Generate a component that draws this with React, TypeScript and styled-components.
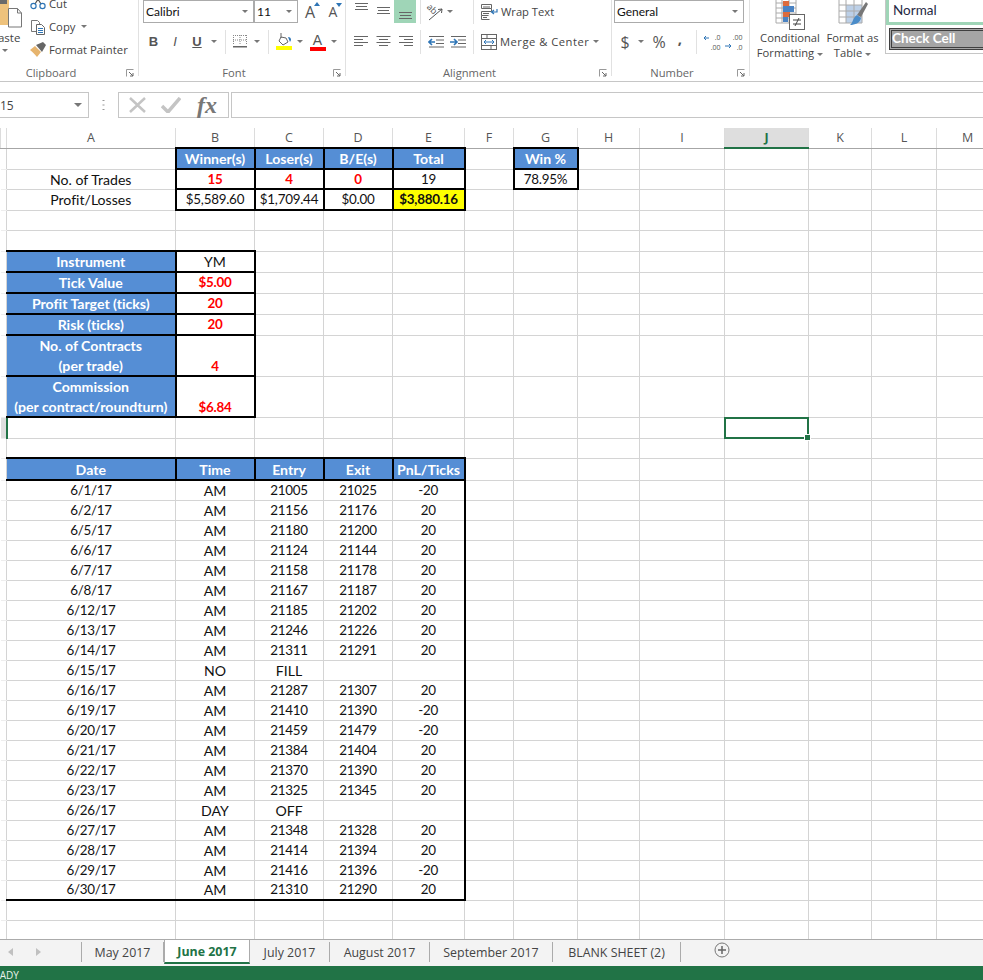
import React from 'react';
import styled, { createGlobalStyle, css } from 'styled-components';

const GlobalStyle = createGlobalStyle`
  html, body {
    margin: 0;
    padding: 0;
    background: #fff;
  }
`;

const uiFont = `'Open Sans', 'Noto Sans', sans-serif`;
const sheetFont = `Lato, 'Liberation Sans', sans-serif`;
const gridLine = '#d4d4d4';
const excelGreen = '#217346';

const Page = styled.div`
  width: 983px;
  height: 980px;
  overflow: hidden;
  display: flex;
  flex-direction: column;
  font-family: ${uiFont};
`;

/* ---------- ribbon ---------- */

const Ribbon = styled.div`
  height: 81px;
  flex: none;
  display: flex;
  border-bottom: 1px solid #c6c6c6;
  overflow: hidden;
  background: #fff;
`;

const Group = styled.div<{ $w: number }>`
  width: ${(p) => p.$w}px;
  flex: none;
  height: 76px;
  display: flex;
  flex-direction: column;
  border-right: 1px solid #e1e1e1;
  box-sizing: border-box;
`;

const GroupBody = styled.div`
  flex: 1;
  min-height: 0;
`;

const GroupFoot = styled.div<{ $shift: number }>`
  height: 19px;
  margin-bottom: -6px;
  box-sizing: border-box;
  padding-right: ${(p) => p.$shift}px;
  display: flex;
  align-items: center;
  justify-content: center;
  position: relative;
  font-size: 11.2px;
  color: #666;
`;

const Launcher = styled.svg`
  position: absolute;
  right: 4px;
  top: 6px;
`;

const ToolRow = styled.div<{ $pl?: number; $mt?: number }>`
  display: flex;
  align-items: center;
  height: 23px;
  padding-left: ${(p) => p.$pl ?? 0}px;
  margin-top: ${(p) => p.$mt ?? 0}px;
`;

const Slot = styled.div<{ $w: number; $on?: boolean }>`
  width: ${(p) => p.$w}px;
  height: 23px;
  flex: none;
  display: flex;
  align-items: center;
  justify-content: center;
  background: ${(p) => (p.$on ? '#9fd5b7' : 'transparent')};
  color: #555;
`;

const RowRule = styled.div`
  width: 1px;
  height: 24px;
  flex: none;
  background: #e1e1e1;
`;

const Caret = styled.span`
  display: block;
  width: 0;
  height: 0;
  border-left: 3px solid transparent;
  border-right: 3px solid transparent;
  border-top: 3px solid #777;
`;

const SelectBox = styled.div<{ $w: number; $ml?: number }>`
  width: ${(p) => p.$w}px;
  margin-left: ${(p) => p.$ml ?? 0}px;
  height: 23px;
  box-sizing: border-box;
  flex: none;
  border: 1px solid #ababab;
  display: flex;
  align-items: center;
  justify-content: space-between;
  padding: 0 5px 0 2px;
  font-family: ${sheetFont};
  font-size: 12px;
  color: #111;
`;

const ClipWrap = styled.div`
  display: flex;
  height: 100%;
`;

const PasteCol = styled.div`
  width: 30px;
  flex: none;
  display: flex;
  flex-direction: column;
  align-items: flex-start;
  color: #444;
  font-size: 11.5px;
`;

const PasteText = styled.span`
  margin: 2px 0 0 -9px;
  line-height: 15px;
`;

const PasteCaret = styled(Caret)`
  margin: 4px 0 0 2px;
`;

const ClipCol = styled.div`
  margin-top: -8px;
  display: flex;
  flex-direction: column;
`;

const ClipItem = styled.div`
  height: 23px;
  display: flex;
  align-items: center;
  gap: 3px;
  font-size: 11.3px;
  color: #444;
  white-space: nowrap;
`;

const ClipIcon = styled.span`
  width: 16px;
  height: 16px;
  flex: none;
  display: block;
`;

const StepA = styled.span<{ $size: number }>`
  position: relative;
  font-size: ${(p) => p.$size}px;
  line-height: 1;
  color: #555;
`;

const StepMark = styled.svg`
  position: absolute;
  top: -2px;
  right: -5px;
`;

const StyleLetter = styled.span<{ $bold?: boolean; $italic?: boolean; $under?: boolean }>`
  font-family: 'Liberation Sans', sans-serif;
  font-size: 13px;
  font-weight: ${(p) => (p.$bold || p.$under ? 700 : 400)};
  font-style: ${(p) => (p.$italic ? 'italic' : 'normal')};
  text-decoration: ${(p) => (p.$under ? 'underline' : 'none')};
  color: #555;
`;

const ColorMark = styled.div<{ $c: string }>`
  width: 16px;
  display: flex;
  flex-direction: column;
  align-items: center;
  font-family: 'Liberation Sans', sans-serif;
  font-size: 14px;
  line-height: 14px;
  font-weight: 400;
  color: #555;
  &::after {
    content: '';
    display: block;
    width: 16px;
    height: 4px;
    background: ${(p) => p.$c};
  }
`;

const ToolLabel = styled.span`
  font-size: 11.2px;
  color: #444;
  white-space: nowrap;
  margin-left: 3px;
`;

const WideLabel = styled(ToolLabel)`
  letter-spacing: 0.5px;
`;

const NumMark = styled.span<{ $size: number; $bold?: boolean; $lift?: number }>`
  font-size: ${(p) => p.$size}px;
  line-height: 1;
  color: #555;
  font-weight: ${(p) => (p.$bold ? 700 : 400)};
  margin-top: ${(p) => p.$lift ?? 0}px;
`;

const StyleCols = styled.div`
  display: flex;
  flex: 1;
  height: 100%;
  padding-left: 7px;
`;

const BigButton = styled.div<{ $w: number; $ml?: number }>`
  width: ${(p) => p.$w}px;
  margin-left: ${(p) => p.$ml ?? 0}px;
  flex: none;
  display: flex;
  flex-direction: column;
  align-items: center;
  font-size: 11.2px;
  line-height: 15px;
  color: #444;
  text-align: center;
  white-space: nowrap;
`;

const BigIcon = styled.div`
  height: 30px;
  display: flex;
  align-items: flex-end;
  overflow: visible;
`;

const InlineCaret = styled(Caret)`
  display: inline-block;
  vertical-align: middle;
  margin-left: 3px;
`;

const Gallery = styled.div`
  margin-left: 5px;
  flex: 1;
  height: 54px;
  box-sizing: border-box;
  border-left: 1px solid #c6c6c6;
  border-bottom: 1px solid #c6c6c6;
`;

const NormalStyle = styled.div`
  height: 25px;
  box-sizing: border-box;
  border: 3px solid #9fd5b7;
  border-top: none;
  border-right: none;
  padding: 0 0 2px 4px;
  display: flex;
  align-items: center;
  font-family: ${sheetFont};
  font-size: 13.5px;
  color: #1f2a44;
`;

const CheckStyle = styled.div`
  height: 22px;
  margin: 3px 0 0 3px;
  box-sizing: border-box;
  border: 3px double #3f3f3f;
  border-right: none;
  background: #a5a5a5;
  display: flex;
  align-items: center;
  padding: 0 0 2px 0;
  font-family: ${sheetFont};
  font-size: 13.5px;
  font-weight: 700;
  color: #fff;
`;

/* ---------- formula bar ---------- */

const FormulaBar = styled.div`
  height: 46px;
  flex: none;
  box-sizing: border-box;
  padding-top: 10px;
  display: flex;
  background: #fff;
`;

const BarField = styled.div`
  height: 26px;
  box-sizing: border-box;
  border: 1px solid #c6c6c6;
  display: flex;
  align-items: center;
`;

const NameBox = styled(BarField)`
  width: 89px;
  border-left: none;
  justify-content: space-between;
  padding-right: 6px;
  font-size: 12px;
  color: #444;
`;

const NameCaret = styled(Caret)`
  border-left-width: 4px;
  border-right-width: 4px;
  border-top-width: 4px;
`;

const DotsWrap = styled.div`
  width: 29px;
  flex: none;
  height: 26px;
  display: flex;
  align-items: center;
  justify-content: center;
`;

const FormulaButtons = styled(BarField)`
  width: 111px;
  padding-left: 9px;
  gap: 14px;
`;

const FxMark = styled.span`
  font-family: 'Liberation Serif', serif;
  font-style: italic;
  font-weight: 700;
  font-size: 24px;
  line-height: 1;
  color: #777;
  margin-left: 2px;
`;

const FormulaInput = styled(BarField)`
  flex: 1;
  margin-left: 2px;
  border-right: none;
`;

/* ---------- sheet ---------- */

const SheetArea = styled.div`
  flex: 1;
  min-height: 0;
  overflow: hidden;
`;

const SheetTable = styled.table`
  border-collapse: collapse;
  table-layout: fixed;
  width: 998px;
`;

const ColHead = styled.th<{ $on?: boolean }>`
  height: 20px;
  padding: 0;
  box-sizing: border-box;
  font-family: ${uiFont};
  font-weight: ${(p) => (p.$on ? 700 : 400)};
  font-size: 12.5px;
  color: ${(p) => (p.$on ? excelGreen : '#555')};
  background: ${(p) => (p.$on ? '#dedede' : '#fff')};
  border-left: 1px solid #dcdcdc;
  border-right: 1px solid #dcdcdc;
  border-bottom: ${(p) => (p.$on ? `2px solid ${excelGreen}` : '1px solid #a6a6a6')};
`;

const Row = styled.tr<{ $h: number }>`
  height: ${(p) => p.$h}px;
`;

const RowHead = styled.td<{ $on?: boolean }>`
  padding: 0;
  background: ${(p) => (p.$on ? '#dedede' : '#fff')};
  border-top: 1px solid #eee;
  border-bottom: 1px solid #eee;
  border-right: ${(p) => (p.$on ? `2px solid ${excelGreen}` : `1px solid ${gridLine}`)};
`;

type Kind = 'plain' | 'head' | 'red' | 'total';

const blackSide = (black: string | undefined, letter: string, side: string) =>
  black && black.includes(letter)
    ? css`
        border-${side}: 2px solid #000;
      `
    : null;

const Cell = styled.td<{ $kind?: Kind; $black?: string; $tall?: boolean; $num?: boolean }>`
  padding: 0;
  position: relative;
  border: 1px solid ${gridLine};
  font-family: ${sheetFont};
  font-size: ${(p) => (p.$num ? 13.4 : 14.1)}px;
  font-variant-ligatures: none;
  letter-spacing: ${(p) => (p.$num ? -0.25 : 0)}px;
  line-height: 17px;
  text-align: center;
  vertical-align: ${(p) => (p.$tall ? 'bottom' : 'middle')};
  white-space: nowrap;
  color: #111;
  ${(p) => blackSide(p.$black, 't', 'top')}
  ${(p) => blackSide(p.$black, 'r', 'right')}
  ${(p) => blackSide(p.$black, 'b', 'bottom')}
  ${(p) => blackSide(p.$black, 'l', 'left')}
  ${(p) =>
    p.$kind === 'head' &&
    css`
      background: #558ed5;
      color: #fff;
      font-weight: 700;
      vertical-align: middle;
    `}
  ${(p) =>
    p.$kind === 'red' &&
    css`
      color: #ff0000;
      font-weight: 700;
    `}
  ${(p) =>
    p.$kind === 'total' &&
    css`
      background: #ffff00;
      color: #111;
      font-weight: 700;
    `}
`;

const MultiLine = styled.span`
  white-space: pre-line;
  display: block;
  line-height: 20px;
  margin: -2px 0;
`;

const SelectionBox = styled.div`
  position: absolute;
  inset: -1px;
  border: 2px solid ${excelGreen};
`;

const SelectionHandle = styled.div`
  position: absolute;
  right: -4px;
  bottom: -4px;
  width: 5px;
  height: 5px;
  background: ${excelGreen};
  border: 1px solid #fff;
`;

/* ---------- tabs and status ---------- */

const TabBar = styled.div`
  height: 27px;
  flex: none;
  box-sizing: border-box;
  display: flex;
  background: #f3f3f3;
  border-top: 1px solid #ababab;
`;

const TabNav = styled.div`
  width: 82px;
  flex: none;
  box-sizing: border-box;
  height: 20px;
  margin-top: 2px;
  border-right: 1px solid #ababab;
  display: flex;
  align-items: center;
  gap: 23px;
  padding-left: 8px;
`;

const NavArrow = styled.span<{ $right?: boolean }>`
  width: 0;
  height: 0;
  border-top: 4px solid transparent;
  border-bottom: 4px solid transparent;
  ${(p) => (p.$right ? 'border-left: 5px solid #c0c0c0;' : 'border-right: 5px solid #c0c0c0;')}
`;

const Tab = styled.div<{ $w: number; $on?: boolean }>`
  width: ${(p) => p.$w}px;
  flex: none;
  box-sizing: border-box;
  display: flex;
  align-items: center;
  justify-content: center;
  font-size: 12.4px;
  white-space: nowrap;
  ${(p) =>
    p.$on
      ? css`
          height: 25px;
          margin-top: -1px;
          background: #fff;
          color: ${excelGreen};
          font-weight: 700;
          border-left: 1px solid #ababab;
          border-right: 1px solid #ababab;
          border-top: 1px solid #ababab;
          border-bottom: 2px solid ${excelGreen};
        `
      : css`
          height: 20px;
          margin-top: 2px;
          color: #444;
          border-right: 1px solid #ababab;
        `}
`;

const AddSheet = styled.svg`
  margin: 2px 0 0 33px;
  flex: none;
`;

const StatusBar = styled.div`
  height: 14px;
  flex: none;
  background: ${excelGreen};
  color: #e8f2ec;
  font-size: 10px;
  line-height: 19px;
  overflow: hidden;
`;

const StatusText = styled.div`
  margin-left: -12px;
`;

/* ---------- icons ---------- */

const Launch = () => (
  <Launcher width="8" height="8" viewBox="0 0 8 8">
    <path d="M.5 7.5V.5h7" fill="none" stroke="#999" />
    <path d="M3 3l4 4M7 4v3H4" fill="none" stroke="#666" />
  </Launcher>
);

const AlignIcon = ({ mode }: { mode: 'left' | 'center' | 'right' }) => {
  const rows = [14, 9, 14, 9];
  return (
    <svg width="15" height="15" viewBox="0 0 15 15">
      {rows.map((w, i) => {
        const x = mode === 'left' ? 0 : mode === 'right' ? 15 - w : (15 - w) / 2;
        return <rect key={i} x={x} y={2 + i * 3} width={w} height="1" fill="#666" />;
      })}
    </svg>
  );
};

const VAlignIcon = ({ y }: { y: number }) => (
  <svg width="15" height="23" viewBox="0 0 15 23">
    {[0, 3, 6].map((d, i) => (
      <rect key={d} x={i === 1 ? 2 : 1} y={y + d} width={i === 1 ? 11 : 13} height="1" fill="#666" />
    ))}
  </svg>
);

const ScissorsIcon = () => (
  <svg width="16" height="16" viewBox="0 0 16 16">
    <path d="M5 8L10 0M11 8L6 0" stroke="#555" strokeWidth="1.2" fill="none" />
    <circle cx="3.5" cy="10" r="2.6" stroke="#2e75b6" strokeWidth="1.2" fill="none" />
    <circle cx="12.5" cy="10" r="2.6" stroke="#2e75b6" strokeWidth="1.2" fill="none" />
  </svg>
);

const CopyIcon = () => (
  <svg width="16" height="16" viewBox="0 0 16 16">
    <path d="M1.5 1.5h6l2 2v9h-8z" fill="#fff" stroke="#777" />
    <path d="M6.5 5.5h5l3 3v7h-8z" fill="#fff" stroke="#666" />
    <path d="M8 9.5h5M8 11.5h5M8 13.5h5" stroke="#2e75b6" />
  </svg>
);

const PainterIcon = () => (
  <svg width="16" height="16" viewBox="0 0 16 16">
    <path d="M0 8l5-4 6 6-4 5C5 13 3 10 0 8z" fill="#e6b46e" />
    <path d="M6 3l7-3 3 3-4 7z" fill="#666" />
  </svg>
);

const PasteIcon = () => (
  <svg width="24" height="28" viewBox="0 0 24 28">
    <rect x="0" y="0" width="9" height="25" fill="#eec27c" />
    <rect x="0" y="0" width="7" height="4" fill="#6a6a6a" />
    <path d="M8.5 8.5h9l4 4.500v14h-13z" fill="#fff" stroke="#777" />
    <path d="M17.500 8.500v4.500h4" fill="none" stroke="#777" />
  </svg>
);

const BordersIcon = () => (
  <svg width="14" height="15" viewBox="0 0 14 15">
    <path d="M.5 1v10M7 1v10M13.500 1v10M0 1.500h14M0 6h14" stroke="#888" strokeDasharray="1 1" fill="none" />
    <rect x="0" y="12" width="14" height="1.500" fill="#666" />
  </svg>
);

const BucketIcon = () => (
  <svg width="16" height="17" viewBox="0 0 16 17">
    <path d="M5 4l5 1 2 4-5 3-4-4z" fill="#fff" stroke="#666" />
    <path d="M5 0v5" stroke="#666" />
    <path d="M12 4c2 0 3 1 3 3l-1 2z" fill="#2e75b6" />
    <rect x="0" y="13" width="16" height="4" fill="#ffff00" />
  </svg>
);

const OrientationIcon = () => (
  <svg width="20" height="20" viewBox="0 0 20 20" overflow="visible">
    <text x="8" y="10" fontSize="9" fontFamily="Open Sans" fill="#555" textAnchor="middle" transform="rotate(45 8 7)">
      ab
    </text>
    <path d="M5 18L18 7M18 7l-4 .5M18 7l-.5 4" stroke="#555" fill="none" />
  </svg>
);

const WrapIcon = () => (
  <svg width="17" height="16" viewBox="0 0 17 16">
    <path d="M.5 .5h10v4H.5zM.5 7.500h10v-3M.5 7.500v4h7M.5 11.500v4h8" fill="none" stroke="#666" />
    <path d="M2 3h7M2 9.500h6M2 13.500h4" stroke="#666" />
    <path d="M16 5v3h-5M13 6l-2.500 2 2.500 2" fill="none" stroke="#2e75b6" strokeWidth="1.2" />
  </svg>
);

const MergeIcon = () => (
  <svg width="16" height="16" viewBox="0 0 16 16">
    <rect x=".5" y=".5" width="15" height="15" fill="#fff" stroke="#666" />
    <path d="M0 4.500h16M0 11.500h16M6 0v4.500M10 11.500V16" stroke="#666" />
    <path d="M3 8h10M5 6L3 8l2 2M11 6l2 2-2 2" fill="none" stroke="#2e75b6" />
  </svg>
);

const IndentIcon = ({ flip }: { flip?: boolean }) => (
  <svg width="16" height="14" viewBox="0 0 16 14">
    <path d="M1 1.500h15M8 5h8M8 8.500h8M1 12h15" stroke="#666" />
    {flip ? (
      <path d="M0 7h6M4 4l3 3-3 3" fill="none" stroke="#2e75b6" strokeWidth="1.600" />
    ) : (
      <path d="M7 7H1M4 4L1 7l3 3" fill="none" stroke="#2e75b6" strokeWidth="1.600" />
    )}
  </svg>
);

const DecimalIcon = ({ top, bottom, left }: { top: string; bottom: string; left?: boolean }) => (
  <svg width="18" height="20" viewBox="0 0 18 20">
    <text x="17.500" y="7.500" textAnchor="end" fontSize="7" fontFamily="Open Sans" fill="#555">
      {top}
    </text>
    <text x="17.500" y="17.500" textAnchor="end" fontSize="7" fontFamily="Open Sans" fill="#555">
      {bottom}
    </text>
    {left ? (
      <path d="M6 6H1M3 4L1 6l2 2" fill="none" stroke="#2e75b6" />
    ) : (
      <path d="M0 14h6M4 12l2 2-2 2" fill="none" stroke="#2e75b6" />
    )}
  </svg>
);

const CondFormatIcon = () => (
  <svg width="30" height="30" viewBox="0 1 30 30">
    <path d="M1 0v24h20M7 0v24M14 0v24M21 0v16M1 4h20M1 9h20M1 14h20M1 19h13" stroke="#aaa" fill="none" />
    <rect x="8" y="2" width="6" height="5" fill="#dd6b3c" />
    <rect x="8" y="7" width="11" height="6" fill="#4a83c3" />
    <rect x="8" y="13" width="7" height="5" fill="#dd6b3c" />
    <rect x="8" y="18" width="5" height="5" fill="#4a83c3" />
    <rect x="14.500" y="15.500" width="15" height="15" fill="#fff" stroke="#666" />
    <path d="M18 21h8M18 25h8M24 19l-4 8" stroke="#444" fill="none" />
  </svg>
);

const FormatTableIcon = () => (
  <svg width="30" height="30" viewBox="0 1 30 30">
    <rect x="1" y="0" width="23" height="24" fill="#fff" />
    <rect x="8" y="6" width="16" height="18" fill="#bcd0e8" />
    <path d="M1 0v24h23V0M8 0v24M16 0v24M1 6h23M1 12h23M1 18h23" stroke="#aaa" fill="none" />
    <path d="M19 16L28 3l2 2-7 13z" fill="#777" />
    <path d="M19 16l4 3c-1 5-6 7-11 7 3-2 3-8 7-10z" fill="#4a8cc9" />
  </svg>
);

/* ---------- sheet data ---------- */

const columns = ['A', 'B', 'C', 'D', 'E', 'F', 'G', 'H', 'I', 'J', 'K', 'L', 'M'];
const colWidths = [6, 169, 79, 69, 69, 72, 49, 64, 62, 85, 84, 63, 65, 62];

type CellDef = { t?: string; kind?: Kind; black?: string; tall?: boolean };
type RowDef = { h: number; cells: Record<string, CellDef>; selected?: boolean };

const headCell = (t: string, black = 'trbl'): CellDef => ({ t, kind: 'head', black });
const boxCell = (t: string, kind: Kind = 'plain', tall = false): CellDef => ({ t, kind, black: 'trbl', tall });

const isNumeric = (t?: string) => !!t && /^[-$\d,.%/]+$/.test(t);

const trades: [string, string, string, string, string][] = [
  ['6/1/17', 'AM', '21005', '21025', '-20'],
  ['6/2/17', 'AM', '21156', '21176', '20'],
  ['6/5/17', 'AM', '21180', '21200', '20'],
  ['6/6/17', 'AM', '21124', '21144', '20'],
  ['6/7/17', 'AM', '21158', '21178', '20'],
  ['6/8/17', 'AM', '21167', '21187', '20'],
  ['6/12/17', 'AM', '21185', '21202', '20'],
  ['6/13/17', 'AM', '21246', '21226', '20'],
  ['6/14/17', 'AM', '21311', '21291', '20'],
  ['6/15/17', 'NO', 'FILL', '', ''],
  ['6/16/17', 'AM', '21287', '21307', '20'],
  ['6/19/17', 'AM', '21410', '21390', '-20'],
  ['6/20/17', 'AM', '21459', '21479', '-20'],
  ['6/21/17', 'AM', '21384', '21404', '20'],
  ['6/22/17', 'AM', '21370', '21390', '20'],
  ['6/23/17', 'AM', '21325', '21345', '20'],
  ['6/26/17', 'DAY', 'OFF', '', ''],
  ['6/27/17', 'AM', '21348', '21328', '20'],
  ['6/28/17', 'AM', '21414', '21394', '20'],
  ['6/29/17', 'AM', '21416', '21396', '-20'],
  ['6/30/17', 'AM', '21310', '21290', '20'],
];

const rows: RowDef[] = [
  {
    h: 21,
    cells: {
      B: headCell('Winner(s)'),
      C: headCell('Loser(s)'),
      D: headCell('B/E(s)'),
      E: headCell('Total'),
      G: headCell('Win %'),
    },
  },
  {
    h: 20,
    cells: {
      A: { t: 'No. of Trades' },
      B: boxCell('15', 'red'),
      C: boxCell('4', 'red'),
      D: boxCell('0', 'red'),
      E: boxCell('19'),
      G: boxCell('78.95%'),
    },
  },
  {
    h: 21,
    cells: {
      A: { t: 'Profit/Losses' },
      B: boxCell('$5,589.60'),
      C: boxCell('$1,709.44'),
      D: boxCell('$0.00'),
      E: boxCell('$3,880.16', 'total'),
    },
  },
  { h: 20, cells: {} },
  { h: 21, cells: {} },
  { h: 21, cells: { A: headCell('Instrument', 'trb'), B: boxCell('YM') } },
  { h: 21, cells: { A: headCell('Tick Value', 'trb'), B: boxCell('$5.00', 'red') } },
  { h: 21, cells: { A: headCell('Profit Target (ticks)', 'trb'), B: boxCell('20', 'red') } },
  { h: 21, cells: { A: headCell('Risk (ticks)', 'trb'), B: boxCell('20', 'red') } },
  { h: 41, cells: { A: headCell('No. of Contracts\n(per trade)', 'trb'), B: boxCell('4', 'red', true) } },
  {
    h: 41,
    cells: { A: headCell('Commission\n(per contract/roundturn)', 'trb'), B: boxCell('$6.84', 'red', true) },
  },
  { h: 21, cells: {}, selected: true },
  { h: 20, cells: {} },
  {
    h: 22,
    cells: {
      A: headCell('Date', 'trb'),
      B: headCell('Time'),
      C: headCell('Entry'),
      D: headCell('Exit'),
      E: headCell('PnL/Ticks'),
    },
  },
  ...trades.map((t, i): RowDef => {
    const bottom = i === trades.length - 1 ? 'b' : '';
    return {
      h: 20,
      cells: {
        A: { t: t[0], black: bottom },
        B: { t: t[1], black: bottom },
        C: { t: t[2], black: bottom },
        D: { t: t[3], black: bottom },
        E: { t: t[4], black: `r${bottom}` },
      },
    };
  }),
  { h: 20, cells: {} },
  { h: 20, cells: {} },
];

const sheets = [
  { name: 'May 2017', w: 82 },
  { name: 'June 2017', w: 86, on: true },
  { name: 'July 2017', w: 80 },
  { name: 'August 2017', w: 100 },
  { name: 'September 2017', w: 123 },
  { name: 'BLANK SHEET (2)', w: 128 },
];

const App: React.FC = () => {
  return (
    <Page>
      <GlobalStyle />
      <Ribbon>
        <Group $w={139}>
          <GroupBody>
            <ClipWrap>
              <PasteCol>
                <PasteIcon />
                <PasteText>Paste</PasteText>
                <PasteCaret />
              </PasteCol>
              <ClipCol>
                <ClipItem>
                  <ClipIcon>
                    <ScissorsIcon />
                  </ClipIcon>
                  Cut
                </ClipItem>
                <ClipItem>
                  <ClipIcon>
                    <CopyIcon />
                  </ClipIcon>
                  Copy
                  <InlineCaret />
                </ClipItem>
                <ClipItem>
                  <ClipIcon>
                    <PainterIcon />
                  </ClipIcon>
                  Format Painter
                </ClipItem>
              </ClipCol>
            </ClipWrap>
          </GroupBody>
          <GroupFoot $shift={36}>
            Clipboard
            <Launch />
          </GroupFoot>
        </Group>

        <Group $w={207}>
          <GroupBody>
            <ToolRow $pl={4}>
              <SelectBox $w={111}>
                Calibri
                <Caret />
              </SelectBox>
              <SelectBox $w={44} $ml={0}>
                11
                <Caret />
              </SelectBox>
              <Slot $w={24}>
                <StepA $size={16}>
                  A
                  <StepMark width="6" height="4" viewBox="0 0 6 4">
                    <path d="M0 4l3-4 3 4z" fill="#2e75b6" />
                  </StepMark>
                </StepA>
              </Slot>
              <Slot $w={22}>
                <StepA $size={14}>
                  A
                  <StepMark width="6" height="4" viewBox="0 0 6 4">
                    <path d="M0 0l3 4 3-4z" fill="#2e75b6" />
                  </StepMark>
                </StepA>
              </Slot>
            </ToolRow>
            <ToolRow $pl={4} $mt={7}>
              <Slot $w={21}>
                <StyleLetter $bold>B</StyleLetter>
              </Slot>
              <Slot $w={22}>
                <StyleLetter $italic>I</StyleLetter>
              </Slot>
              <Slot $w={22}>
                <StyleLetter $under>U</StyleLetter>
              </Slot>
              <Slot $w={12}>
                <Caret />
              </Slot>
              <Slot $w={5} />
              <RowRule />
              <Slot $w={28}>
                <BordersIcon />
              </Slot>
              <Slot $w={6}>
                <Caret />
              </Slot>
              <Slot $w={8} />
              <RowRule />
              <Slot $w={3} />
              <Slot $w={24}>
                <BucketIcon />
              </Slot>
              <Slot $w={8}>
                <Caret />
              </Slot>
              <Slot $w={27}>
                <ColorMark $c="#ff0000">A</ColorMark>
              </Slot>
              <Slot $w={6}>
                <Caret />
              </Slot>
            </ToolRow>
          </GroupBody>
          <GroupFoot $shift={16}>
            Font
            <Launch />
          </GroupFoot>
        </Group>

        <Group $w={266}>
          <GroupBody>
            <ToolRow $pl={4}>
              <Slot $w={22}>
                <VAlignIcon y={3} />
              </Slot>
              <Slot $w={22}>
                <VAlignIcon y={7} />
              </Slot>
              <Slot $w={22} $on>
                <VAlignIcon y={12} />
              </Slot>
              <Slot $w={4} />
              <RowRule />
              <Slot $w={26}>
                <OrientationIcon />
              </Slot>
              <Slot $w={6}>
                <Caret />
              </Slot>
              <Slot $w={20} />
              <RowRule />
              <Slot $w={7} />
              <WrapIcon />
              <ToolLabel>Wrap Text</ToolLabel>
            </ToolRow>
            <ToolRow $pl={4} $mt={7}>
              <Slot $w={22}>
                <AlignIcon mode="left" />
              </Slot>
              <Slot $w={22}>
                <AlignIcon mode="center" />
              </Slot>
              <Slot $w={22}>
                <AlignIcon mode="right" />
              </Slot>
              <Slot $w={4} />
              <RowRule />
              <Slot $w={4} />
              <Slot $w={22}>
                <IndentIcon />
              </Slot>
              <Slot $w={22}>
                <IndentIcon flip />
              </Slot>
              <Slot $w={4} />
              <RowRule />
              <Slot $w={7} />
              <MergeIcon />
              <WideLabel>Merge &amp; Center</WideLabel>
              <Slot $w={14}>
                <Caret />
              </Slot>
            </ToolRow>
          </GroupBody>
          <GroupFoot $shift={18}>
            Alignment
            <Launch />
          </GroupFoot>
        </Group>

        <Group $w={138}>
          <GroupBody>
            <ToolRow $pl={2}>
              <SelectBox $w={130}>
                General
                <Caret />
              </SelectBox>
            </ToolRow>
            <ToolRow $pl={2} $mt={7}>
              <Slot $w={22}>
                <NumMark $size={16}>$</NumMark>
              </Slot>
              <Slot $w={10}>
                <Caret />
              </Slot>
              <Slot $w={26}>
                <NumMark $size={16}>%</NumMark>
              </Slot>
              <Slot $w={16}>
                <NumMark $size={15} $bold $lift={-7}>
                  ,
                </NumMark>
              </Slot>
              <Slot $w={8} />
              <RowRule />
              <Slot $w={4} />
              <Slot $w={22}>
                <DecimalIcon top=".0" bottom=".00" left />
              </Slot>
              <Slot $w={22}>
                <DecimalIcon top=".00" bottom=".0" />
              </Slot>
            </ToolRow>
          </GroupBody>
          <GroupFoot $shift={17}>
            Number
            <Launch />
          </GroupFoot>
        </Group>

        <StyleCols>
          <BigButton $w={66}>
            <BigIcon>
              <CondFormatIcon />
            </BigIcon>
            Conditional
            <span>
              Formatting
              <InlineCaret />
            </span>
          </BigButton>
          <BigButton $w={55} $ml={2}>
            <BigIcon>
              <FormatTableIcon />
            </BigIcon>
            Format as
            <span>
              Table
              <InlineCaret />
            </span>
          </BigButton>
          <Gallery>
            <NormalStyle>Normal</NormalStyle>
            <CheckStyle>Check Cell</CheckStyle>
          </Gallery>
        </StyleCols>
      </Ribbon>

      <FormulaBar>
        <NameBox>
          15
          <NameCaret />
        </NameBox>
        <DotsWrap>
          <svg width="3" height="12" viewBox="0 0 3 12">
            <path d="M1.500 1v1M1.500 5.500v1M1.500 10v1" stroke="#999" strokeWidth="2" />
          </svg>
        </DotsWrap>
        <FormulaButtons>
          <svg width="19" height="18" viewBox="0 0 19 18">
            <path d="M2 2l15 14M17 2L2 16" stroke="#c4c4c4" strokeWidth="2.500" fill="none" />
          </svg>
          <svg width="20" height="16" viewBox="0 0 20 16">
            <path d="M1 9l6 6L19 1" stroke="#c4c4c4" strokeWidth="3.500" fill="none" />
          </svg>
          <FxMark>fx</FxMark>
        </FormulaButtons>
        <FormulaInput />
      </FormulaBar>

      <SheetArea>
        <SheetTable>
          <colgroup>
            {colWidths.map((w, i) => (
              <col key={i} width={w} />
            ))}
          </colgroup>
          <thead>
            <tr>
              <ColHead />
              {columns.map((c) => (
                <ColHead key={c} $on={c === 'J'}>
                  {c}
                </ColHead>
              ))}
            </tr>
          </thead>
          <tbody>
            {rows.map((row, r) => (
              <Row key={r} $h={row.h}>
                <RowHead $on={row.selected} />
                {columns.map((c) => {
                  const cell = row.cells[c] ?? {};
                  return (
                    <Cell
                      key={c}
                      $kind={cell.kind}
                      $black={cell.black}
                      $tall={cell.tall}
                      $num={isNumeric(cell.t)}
                    >
                      {cell.t && cell.t.includes('\n') ? <MultiLine>{cell.t}</MultiLine> : cell.t}
                      {row.selected && c === 'J' && (
                        <SelectionBox>
                          <SelectionHandle />
                        </SelectionBox>
                      )}
                    </Cell>
                  );
                })}
              </Row>
            ))}
          </tbody>
        </SheetTable>
      </SheetArea>

      <TabBar>
        <TabNav>
          <NavArrow />
          <NavArrow $right />
        </TabNav>
        {sheets.map((s) => (
          <Tab key={s.name} $w={s.w} $on={s.on}>
            {s.name}
          </Tab>
        ))}
        <AddSheet width="16" height="16" viewBox="0 0 16 16">
          <circle cx="8" cy="8" r="7" fill="none" stroke="#777" />
          <path d="M8 4v8M4 8h8" stroke="#666" strokeWidth="1.500" />
        </AddSheet>
      </TabBar>
      <StatusBar>
        <StatusText>READY</StatusText>
      </StatusBar>
    </Page>
  );
};

export default App;
